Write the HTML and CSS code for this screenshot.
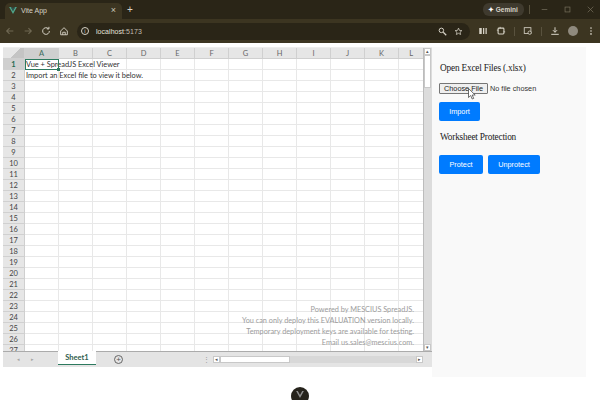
FILE: index.html
```html
<!DOCTYPE html>
<html lang="en">
<head>
<meta charset="utf-8">
<title>Vite App</title>
<link rel="stylesheet" href="styles.css">
</head>
<body>
<header class="browser">
  <div class="tabstrip">
    <div class="tab">
      <svg class="favicon" viewBox="0 0 10 9"><path d="M0 0h2.200L5 5 7.800 0H10L5 9z" fill="#4fa58a"/><path d="M2.200 0h1.600L5 2.200 6.200 0h1.600L5 5z" fill="#2f5a58"/></svg>
      <span class="tab-title">Vite App</span>
      <span class="tab-close">×</span>
    </div>
    <span class="new-tab">+</span>
    <div class="strip-right">
      <span class="gemini"><span class="gem-star">✦</span> Gemini</span>
      <span class="vsep"></span>
      <svg class="win" viewBox="0 0 10 10"><path d="M1 5h8" stroke="#77705d" fill="none"/></svg>
      <svg class="win" viewBox="0 0 10 10"><rect x="1.500" y="1.500" width="7" height="7" stroke="#77705d" fill="none"/></svg>
      <svg class="win" viewBox="0 0 10 10"><path d="M1 1l8 8M9 1l-8 8" stroke="#77705d" fill="none"/></svg>
    </div>
  </div>
  <div class="toolbar">
    <svg class="tb" viewBox="0 0 12 12"><path d="M10 6H2M5.500 2.500L2 6l3.500 3.500" stroke="#6f6853" stroke-width="1.300" fill="none"/></svg>
    <svg class="tb" viewBox="0 0 12 12"><path d="M2 6h8M6.500 2.500L10 6l-3.500 3.500" stroke="#6f6853" stroke-width="1.300" fill="none"/></svg>
    <svg class="tb" viewBox="0 0 12 12"><path d="M10 6a4 4 0 1 1-1.200-2.800M9.500 1v2.500H7" stroke="#d6d2c6" stroke-width="1.200" fill="none"/></svg>
    <svg class="tb" viewBox="0 0 12 12"><path d="M2 6l4-4 4 4v4.500H2zM4.500 10.500V7.500h3v3" stroke="#d6d2c6" stroke-width="1.100" fill="none"/></svg>
    <div class="omnibox">
      <span class="info">i</span>
      <span class="url">localhost<span class="url-port">:5173</span></span>
      <span class="omni-right">
        <svg class="tb" viewBox="0 0 12 12"><circle cx="4.500" cy="4.500" r="3" stroke="#d6d2c6" stroke-width="1.300" fill="none"/><path d="M7 7l4 4" stroke="#d6d2c6" stroke-width="1.600"/></svg>
        <svg class="tb" viewBox="0 0 12 12"><path d="M6 1.500l1.300 3 3.200.3-2.400 2.100.7 3.100L6 8.400 3.200 10l.7-3.100L1.500 4.800l3.200-.3z" stroke="#d6d2c6" fill="none"/></svg>
      </span>
    </div>
    <div class="tb-right">
      <svg class="tb" viewBox="0 0 12 12"><path d="M1.500 2.500h3v7h-3zM6 2.500h1.500v7H6zM9 2.500h1.500v7H9z" fill="#d6d2c6"/></svg>
      <svg class="tb" viewBox="0 0 12 12"><rect x="2.500" y="2.500" width="7" height="7" rx="1" stroke="#d6d2c6" stroke-width="1.300" fill="none"/><path d="M1 5h2M9 7h2M5 1v2" stroke="#d6d2c6"/></svg>
      <span class="vsep"></span>
      <svg class="tb" viewBox="0 0 12 12"><rect x="1.500" y="2" width="8" height="7" stroke="#d6d2c6" fill="none"/><circle cx="8" cy="8" r="2" fill="#3c3521" stroke="#d6d2c6"/></svg>
      <span class="vsep"></span>
      <svg class="tb" viewBox="0 0 12 12"><path d="M6 1.500v6M3.500 5L6 7.500 8.500 5M1.500 10h9" stroke="#d6d2c6" stroke-width="1.200" fill="none"/></svg>
      <span class="avatar"></span>
      <svg class="tb" viewBox="0 0 12 12"><circle cx="6" cy="2.500" r="1" fill="#d6d2c6"/><circle cx="6" cy="6" r="1" fill="#d6d2c6"/><circle cx="6" cy="9.500" r="1" fill="#d6d2c6"/></svg>
    </div>
  </div>
</header>

<main class="page">
  <section class="sheet">
    <div class="sheet-body">
      <div class="grid-area">
        <div class="col-headers">
          <span class="corner"></span>
          <span class="col active">A</span><span class="col">B</span><span class="col">C</span><span class="col">D</span><span class="col">E</span><span class="col">F</span><span class="col">G</span><span class="col">H</span><span class="col">I</span><span class="col">J</span><span class="col">K</span><span class="col cut">L</span>
        </div>
        <div class="grid-body">
          <div class="row-headers">
            <span class="rh active">1</span><span class="rh">2</span><span class="rh">3</span><span class="rh">4</span><span class="rh">5</span><span class="rh">6</span><span class="rh">7</span><span class="rh">8</span><span class="rh">9</span><span class="rh">10</span><span class="rh">11</span><span class="rh">12</span><span class="rh">13</span><span class="rh">14</span><span class="rh">15</span><span class="rh">16</span><span class="rh">17</span><span class="rh">18</span><span class="rh">19</span><span class="rh">20</span><span class="rh">21</span><span class="rh">22</span><span class="rh">23</span><span class="rh">24</span><span class="rh">25</span><span class="rh">26</span><span class="rh">27</span>
          </div>
          <div class="cells">
            <div class="cell-line">Vue + SpreadJS Excel Viewer</div>
            <div class="cell-line">Import an Excel file to view it below.</div>
            <div class="selection"><span class="handle"></span></div>
            <div class="watermark">
              <div>Powered by MESCIUS SpreadJS.</div>
              <div>You can only deploy this EVALUATION version locally.</div>
              <div>Temporary deployment keys are available for testing.</div>
              <div>Email us.sales@mescius.com.</div>
            </div>
          </div>
        </div>
      </div>
      <div class="vscroll">
        <span class="sbtn">▴</span>
        <span class="vthumb"></span>
        <span class="vtrack"></span>
        <span class="sbtn">▾</span>
      </div>
    </div>
    <div class="tabbar">
      <div class="nav-arrows"><span>◂</span><span>▸</span></div>
      <span class="sheet-tab">Sheet1</span>
      <span class="add-sheet">+</span>
      <span class="split">⋮</span>
      <div class="hscroll">
        <span class="sbtn">◂</span>
        <span class="hthumb"></span>
        <span class="htrack"></span>
        <span class="sbtn">▸</span>
      </div>
    </div>
  </section>

  <aside class="panel">
    <h3 class="panel-title">Open Excel Files (.xlsx)</h3>
    <div class="file-row"><span class="file-btn">Choose File</span><span class="file-text">No file chosen</span></div>
    <button class="btn import">Import</button>
    <h3 class="panel-title protect-title">Worksheet Protection</h3>
    <div class="btn-row">
      <button class="btn">Protect</button>
      <button class="btn">Unprotect</button>
    </div>
  </aside>
</main>

<svg class="cursor" viewBox="0 0 8 12"><path d="M.5.500v9l2.200-2 1.500 3.500 1.500-.6-1.500-3.400h3z" fill="#fff" stroke="#333" stroke-width=".7"/></svg>
<div class="devtools"><svg viewBox="0 0 10 9"><path d="M0 0h2.200L5 5 7.800 0H10L5 9z" fill="#8f8f8f"/></svg></div>
</body>
</html>
```
FILE: styles.css
```css
* { box-sizing: border-box; }
html, body { margin: 0; padding: 0; }
body {
  width: 600px; height: 400px; overflow: hidden; background: #fff;
  font-family: "Liberation Sans", Arial, sans-serif; position: relative;
}

.browser { height: 43px; display: flex; flex-direction: column; }
.tabstrip { height: 19px; background: #2a2517; display: flex; align-items: flex-end; color: #d8d4c8; padding-left: 5px; }
.tab { width: 117px; height: 16px; background: #3c3521; border-radius: 5px 5px 0 0; display: flex; align-items: center; padding: 0 6px 2px 4px; font-size: 7px; gap: 4px; }
.favicon { width: 8px; height: 7px; }
.tab-title { flex: 1; }
.tab-close { font-size: 9px; line-height: 1; color: #c9c5b8; }
.new-tab { font-size: 10px; line-height: 1; margin: 0 0 4px 5px; }
.strip-right { margin-left: auto; display: flex; align-items: center; height: 19px; padding-right: 6px; }
.gemini { height: 13px; background: #3f3a2e; border-radius: 6px; font-size: 6.500px; font-weight: 700; line-height: 13px; padding: 0 5px; width: 41px; white-space: nowrap; margin-right: 5px; }
.gem-star { color: #fff; }
.strip-right .vsep { margin-right: 11px; }
.win { width: 7px; height: 7px; margin-right: 16px; }
.win:last-child { margin-right: 0; }
.vsep { width: 1px; height: 9px; background: #59523e; display: block; }

.toolbar { height: 24px; background: #3c3521; display: flex; align-items: center; padding-left: 5px; }
.tb { width: 10px; height: 10px; flex: none; margin-right: 8px; }
.omnibox { width: 393px; height: 17px; background: #2a2517; border-radius: 9px; display: flex; align-items: center; padding: 0 7px 0 4px; flex: none; }
.info { width: 8px; height: 8px; border: 1px solid #d6d2c6; border-radius: 50%; color: #d6d2c6; font-size: 6px; line-height: 6px; text-align: center; margin-right: 7px; flex: none; }
.url { font-size: 7px; color: #e6e3da; letter-spacing: .05px; }
.url-port { color: #c2beb1; }
.omni-right { margin-left: auto; display: flex; gap: 7px; }
.omni-right .tb { margin: 0; width: 9px; height: 9px; }
.tb-right { display: flex; align-items: center; margin-left: 8px; }
.tb-right .vsep { margin-right: 8px; }
.avatar { width: 10px; height: 10px; border-radius: 50%; background: #8f8a7e; margin-right: 8px; flex: none; }
.tb-right .tb:last-child { margin: 0; }

.page { display: flex; align-items: flex-start; padding: 4px 14px 0 3px; }

.sheet { width: 429px; height: 320px; display: flex; flex-direction: column; border-top: 1px solid #ededed; }
.sheet-body { display: flex; height: 304px; border-bottom: 1px solid #ababab; }
.grid-area { flex: 1; min-width: 0; display: flex; flex-direction: column; overflow: hidden; }
.col-headers { display: flex; height: 11px; background: #e6e6e6; flex: none; border-bottom: 1px solid #cfcfcf; }
.corner { width: 22px; flex: none; background: linear-gradient(135deg, #e6e6e6 55%, #c4c4c4 56%); border-right: 1px solid #d0d0d0; }
.col { width: 34px; flex: none; font: 7.500px/11px "Lato", sans-serif; color: #666; text-align: center; border-right: 1px solid #d0d0d0; }
.col.active { background: #cfcfcf; color: #3e6b5c; }
.col.cut { text-align: right; border: 0; padding-right: 1px; width: 15px; }

.grid-body { display: flex; flex: 1; min-height: 0; overflow: hidden; }
.row-headers { width: 22px; flex: none; background: #e6e6e6; border-right: 1px solid #cfcfcf; }
.rh { display: block; height: 11px; font: 7.500px/11px "Lato", sans-serif; color: #444; text-align: center; border-bottom: 1px solid #d0d0d0; }
.rh.active { background: #cfcfcf; color: #1e6b52; font-weight: 700; }

.cells {
  flex: 1; position: relative; background-color: #fff; padding-left: 1px;
  background-image:
    linear-gradient(to right, transparent 33px, #e8e8e8 33px),
    linear-gradient(to bottom, transparent 10px, #e8e8e8 10px);
  background-size: 34px 100%, 100% 11px;
}
.cell-line { height: 11px; font: 7.400px/11px "Lato", sans-serif; color: #333; white-space: nowrap; }
.selection { position: absolute; left: 0; top: 0; width: 34px; height: 11px; border: 1px solid #2d7a5f; }
.handle { position: absolute; right: -2px; bottom: -2px; width: 3px; height: 3px; background: #2d7a5f; border: 0; }
.watermark {
  position: absolute; right: 9px; bottom: 3px; text-align: right;
  font: 7.300px/11px "Lato", sans-serif; color: #9c9c9c; white-space: nowrap;
}

.vscroll { width: 9px; flex: none; background: #dcdcdc; display: flex; flex-direction: column; border-left: 1px solid #bcbcbc; }
.sbtn { width: 7px; height: 7px; flex: none; background: #fff; border: 1px solid #c8c8c8; font-size: 5px; line-height: 5px; text-align: center; color: #555; overflow: hidden; }
.vthumb { height: 33px; flex: none; background: #fff; border: 1px solid #c8c8c8; width: 7px; margin-top: 0; }
.vtrack { flex: 1; }

.tabbar { height: 15px; background: #e4e4e4; display: flex; align-items: flex-start; flex: none; }
.nav-arrows { width: 55px; display: flex; gap: 11px; font-size: 5px; line-height: 15px; color: #a5a5a5; padding-left: 14px; }
.sheet-tab { width: 38px; height: 14px; background: #fff; border-bottom: 1px solid #2d7a5f; margin-top: -1px; font: 700 7.500px/13px "Lato", sans-serif; color: #2e5d4e; text-align: center; flex: none; }
.add-sheet { width: 9px; height: 9px; border: 1px solid #666; border-radius: 50%; font-size: 8px; line-height: 7px; text-align: center; color: #555; margin: 3px 0 0 18px; flex: none; }
.split { font-size: 7px; line-height: 15px; color: #999; margin-left: 80px; width: 8px; }
.hscroll { flex: 1; display: flex; height: 7px; margin: 4px 0 0 2px; background: #d8d8d8; margin-right: 9px; }
.hthumb { width: 70px; flex: none; height: 7px; background: #fff; border: 1px solid #c8c8c8; }
.htrack { flex: 1; }

.panel { width: 154px; height: 330px; background: #f9f9f9; padding: 16px 7px 0; flex: none; }
.panel-title { margin: 0 0 0 1px; font: 400 9.300px/11px "Liberation Serif", serif; letter-spacing: -.2px; color: #222; }
.file-row { display: flex; align-items: center; margin-top: 9px; height: 11px; font: 7.300px/11px "Liberation Sans", sans-serif; }
.file-btn { width: 49px; height: 11px; background: #efefef; border: 1px solid #767676; border-radius: 1px; color: #222; text-align: center; line-height: 9px; flex: none; }
.file-text { margin-left: 2px; color: #333; }
.btn { height: 19px; padding: 0; border: 0; border-radius: 2px; background: #007bff; color: #fff; font: 7.300px/19px "Liberation Sans", sans-serif; display: block; }
.import { width: 41px; margin-top: 8px; }
.protect-title { margin-top: 11px; }
.btn-row { display: flex; gap: 5px; margin-top: 12px; }
.btn-row .btn:first-child { width: 44px; }
.btn-row .btn:last-child { width: 52px; }

.cursor { position: absolute; left: 468px; top: 88px; width: 8px; height: 12px; }
.devtools { position: absolute; left: 291px; top: 387px; width: 18px; height: 18px; border-radius: 50%; background: #26231c; display: flex; justify-content: center; padding-top: 4px; }
.devtools svg { width: 8px; height: 7px; }
```
